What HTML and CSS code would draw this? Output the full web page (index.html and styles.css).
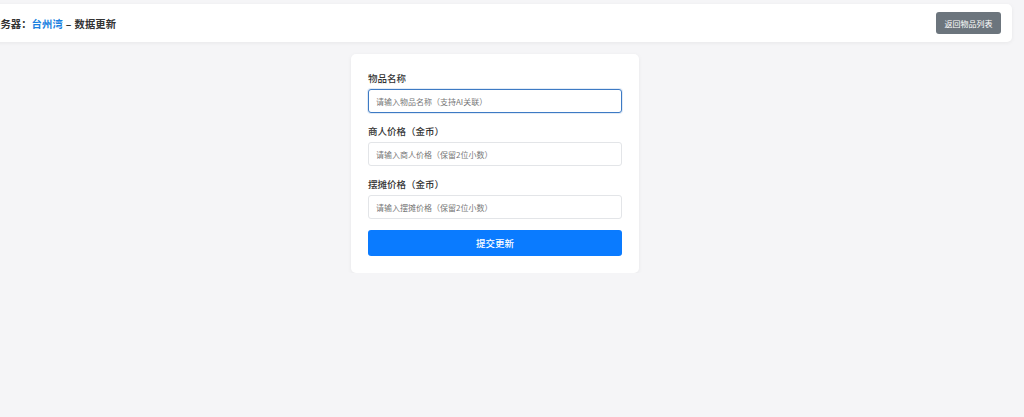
FILE: index.html
```html
<!DOCTYPE html>
<html lang="zh">
<head>
<meta charset="utf-8">
<title>数据更新</title>
<link rel="stylesheet" href="styles.css">
</head>
<body>
<div class="page">
  <header class="topbar">
    <h1 class="title">服务器：<span class="server">台州湾</span><span class="dash">–</span>数据更新</h1>
    <button class="btn-back" type="button">返回物品列表</button>
  </header>
  <main class="main">
    <form class="card">
      <div class="group">
        <label class="label">物品名称</label>
        <input class="input focus" type="text" placeholder="请输入物品名称（支持AI关联）">
      </div>
      <div class="group">
        <label class="label">商人价格（金币）</label>
        <input class="input" type="text" placeholder="请输入商人价格（保留2位小数）">
      </div>
      <div class="group">
        <label class="label">摆摊价格（金币）</label>
        <input class="input" type="text" placeholder="请输入摆摊价格（保留2位小数）">
      </div>
      <button class="btn-submit" type="button">提交更新</button>
    </form>
  </main>
</div>
</body>
</html>
```

FILE: styles.css
```css
* { box-sizing: border-box; }
html, body { margin: 0; padding: 0; }
body {
  background: #f5f5f7;
  font-family: "Noto Sans CJK SC", "Noto Sans", "Liberation Sans", sans-serif;
  color: #333;
  overflow: hidden;
}
.page {
  width: 1034px;
  margin-left: -22px;
  padding-top: 4px;
}
.topbar {
  height: 38px;
  background: #fff;
  border-radius: 5px;
  box-shadow: 0 1px 4px rgba(0,0,0,0.06);
  display: flex;
  align-items: center;
  justify-content: space-between;
  padding: 0 11px 0 12px;
}
.title {
  margin: 0;
  font-size: 10.3px;
  font-weight: 700;
  color: #333;
  letter-spacing: 0.1px;
}
.server { color: #1a7fe0; }
.dash { margin: 0 3px; }
.btn-back {
  height: 22px;
  width: 65px;
  padding: 0;
  border: none;
  border-radius: 3px;
  background: #6c757d;
  color: #fff;
  font-family: inherit;
  font-size: 8px;
}
.main {
  display: flex;
  justify-content: center;
  padding-top: 12px;
}
.card {
  width: 288px;
  background: #fff;
  border-radius: 5px;
  box-shadow: 0 1px 4px rgba(0,0,0,0.06);
  padding: 17px;
  display: flex;
  flex-direction: column;
}
.group {
  display: flex;
  flex-direction: column;
  margin-bottom: 11px;
}
.label {
  font-size: 9.5px;
  line-height: 14px;
  font-weight: 500;
  color: #333;
  margin-bottom: 4px;
}
.input {
  height: 24px;
  width: 100%;
  border: 1px solid #e3e5e8;
  border-radius: 3px;
  padding: 0 7px;
  font-family: inherit;
  font-size: 8px;
  color: #333;
  background: #fff;
  outline: none;
}
.input::placeholder { color: #777; }
.input.focus {
  border: 1.5px solid #3d7ac4;
  box-shadow: 0 0 0 1px rgba(61,122,196,0.15);
}
.btn-submit {
  height: 26px;
  width: 100%;
  border: none;
  border-radius: 3px;
  background: #0a7bff;
  color: #fff;
  font-family: inherit;
  font-size: 9.5px;
  font-weight: 500;
}
```
